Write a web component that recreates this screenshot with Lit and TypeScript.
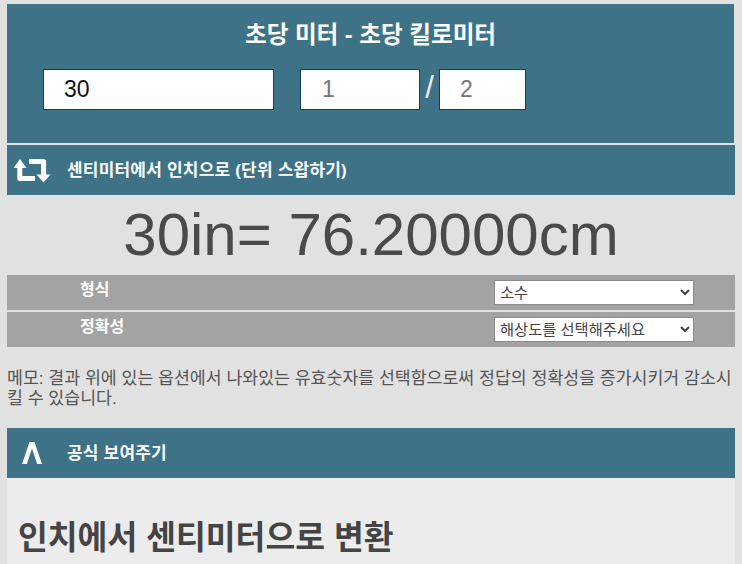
import { LitElement, html, css } from "lit";
import { customElement } from "lit/decorators.js";

@customElement("app-root")
export class AppRoot extends LitElement {
  static styles = css`
    :host {
      display: block;
      height: 564px;
      overflow: hidden;
      background: #e1e1e1;
      font-family: "Liberation Sans", "Noto Sans CJK KR", sans-serif;
      color: #444;
    }
    .page { padding: 4px 7px 0 7px; }
    .panel {
      box-sizing: border-box;
      width: 727px;
      height: 139px;
      background: #3e7287;
    }
    h1 {
      margin: 0;
      padding-top: 17px;
      height: 48px;
      box-sizing: border-box;
      text-align: center;
      color: #fff;
      font-size: 23.6px;
      line-height: 28px;
      font-weight: bold;
    }
    .inputs {
      display: flex;
      align-items: center;
      margin-top: 17px;
      padding-left: 36px;
    }
    input {
      box-sizing: border-box;
      height: 41px;
      border: 1px solid #0f4256;
      background: #fff;
      padding: 0 0 0 20px;
      margin: 0;
      font: 23px "Liberation Sans", sans-serif;
      color: #111;
      outline: none;
      border-radius: 0;
    }
    input::placeholder { color: #757575; opacity: 1; }
    .val { width: 231px; }
    .num { width: 120px; margin-left: 26px; padding-left: 21px; }
    .den { width: 87px; }
    .slash {
      width: 19px;
      text-align: center;
      color: #eee;
      font-size: 31px;
      line-height: 36px;
      margin-top: -4px;
    }
    .bar {
      display: flex;
      align-items: center;
      height: 50px;
      background: #3e7287;
      color: #fff;
      font-weight: bold;
      font-size: 17px;
      letter-spacing: 0.2px;
      width: 728px;
    }
    .bar span { padding-bottom: 3px; }
    .swap { margin-top: 2px; }
    .bar .ico {
      width: 60px;
      display: flex;
      justify-content: center;
      box-sizing: border-box;
      padding-right: 11px;
      flex: none;
    }
    .result {
      height: 80px;
      font-size: 60px;
      line-height: 80px;
      text-align: center;
      color: #4a4a4a;
      width: 728px;
    }
    .row {
      display: flex;
      align-items: center;
      justify-content: space-between;
      box-sizing: border-box;
      height: 35px;
      width: 728px;
      background: #a3a3a3;
      color: #fff;
      font-weight: bold;
      font-size: 16px;
      padding: 0 41px 1px 73px;
    }
    .row + .row { margin-top: 2px; }
    .row span { padding-bottom: 9px; }
    select {
      box-sizing: border-box;
      width: 200px;
      height: 25px;
      font: 15.3px "Liberation Sans", "Noto Sans CJK KR", sans-serif;
      color: #444;
      background: #fff;
      border: 1px solid #8a8a8a;
      border-radius: 0;
      padding: 0 0 0 1px;
    }
    .note {
      margin: 21px 0 0;
      font-size: 17.27px;
      line-height: 20px;
      height: 40px;
      width: 727px;
      color: #555;
    }
    .formula { margin-top: 20px; }
    .content {
      width: 728px;
      height: 100px;
      background: #ececec;
      box-sizing: border-box;
      padding: 39px 11px 0;
    }
    h2 {
      margin: 0;
      font-size: 32.4px;
      line-height: 42px;
      font-weight: bold;
      color: #444;
    }
  `;

  render() {
    return html`
      <div class="page">
        <section class="panel">
          <h1>초당 미터 - 초당 킬로미터</h1>
          <div class="inputs">
            <input class="val" value="30" />
            <input class="num" placeholder="1" />
            <div class="slash">/</div>
            <input class="den" placeholder="2" />
          </div>
        </section>
        <div class="bar swap">
          <div class="ico">
            <svg width="38" height="26" viewBox="0 0 38 26" fill="none" stroke="#fff" stroke-width="5" stroke-linejoin="round">
              <path d="M6.8 10V21.5H22" />
              <path d="M0.5 11L7 2L13.5 11Z" stroke="none" fill="#fff" />
              <path d="M16 4.5H30.6V18" />
              <path d="M23.5 17.5H37.5L30.5 25.5Z" stroke="none" fill="#fff" />
            </svg>
          </div>
          <span>센티미터에서 인치으로 (단위 스왑하기)</span>
        </div>
        <div class="result">30in= 76.20000cm</div>
        <div class="row">
          <span>형식</span>
          <select><option>소수</option></select>
        </div>
        <div class="row">
          <span>정확성</span>
          <select><option>해상도를 선택해주세요</option></select>
        </div>
        <p class="note">메모: 결과 위에 있는 옵션에서 나와있는 유효숫자를 선택함으로써 정답의 정확성을 증가시키거 감소시킬 수 있습니다.</p>
        <div class="bar formula">
          <div class="ico">
            <svg width="20" height="22" viewBox="0 0 20 22" fill="#fff">
              <path d="M7.5 0H12.5L20 22H15.2L10 6.5L4.8 22H0Z" />
            </svg>
          </div>
          <span>공식 보여주기</span>
        </div>
        <section class="content">
          <h2>인치에서 센티미터으로 변환</h2>
        </section>
      </div>
    `;
  }
}
